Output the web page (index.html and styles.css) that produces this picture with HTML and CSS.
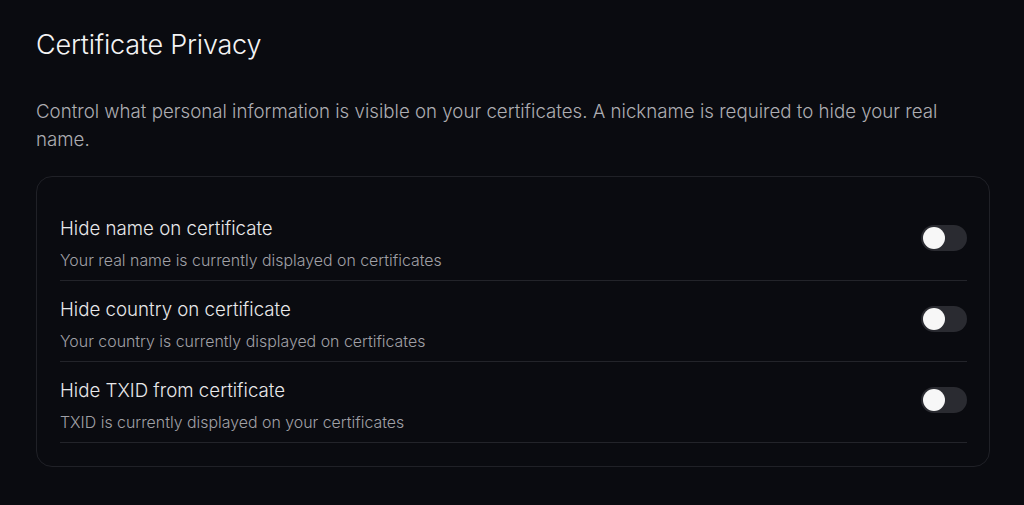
FILE: index.html
```html
<!DOCTYPE html>
<html lang="en">
<head>
<meta charset="utf-8">
<title>Certificate Privacy</title>
<link rel="stylesheet" href="styles.css">
</head>
<body>
<main class="section">
  <h2 class="section-title">Certificate Privacy</h2>
  <p class="section-desc">Control what personal information is visible on your certificates. A nickname is required to hide your real name.</p>
  <div class="card">
    <div class="row">
      <div class="row-text">
        <div class="row-title">Hide name on certificate</div>
        <div class="row-sub">Your real name is currently displayed on certificates</div>
      </div>
      <button class="switch" role="switch" aria-checked="false"><span class="knob"></span></button>
    </div>
    <div class="row">
      <div class="row-text">
        <div class="row-title">Hide country on certificate</div>
        <div class="row-sub">Your country is currently displayed on certificates</div>
      </div>
      <button class="switch" role="switch" aria-checked="false"><span class="knob"></span></button>
    </div>
    <div class="row">
      <div class="row-text">
        <div class="row-title">Hide TXID from certificate</div>
        <div class="row-sub">TXID is currently displayed on your certificates</div>
      </div>
      <button class="switch" role="switch" aria-checked="false"><span class="knob"></span></button>
    </div>
  </div>
</main>
</body>
</html>
```
FILE: styles.css
```css
html, body {
  margin: 0;
  padding: 0;
  background: #0a0b10;
}

body {
  font-family: Inter, "Noto Sans", sans-serif;
  color: #e6e6e8;
  width: 1024px;
  height: 505px;
  overflow: hidden;
}

.section {
  padding: 28px 34px 0 36px;
}

.section-title {
  margin: 0;
  font-size: 27px;
  font-weight: 300;
  line-height: 34px;
  color: #f4f4f5;
  letter-spacing: -0.2px;
}

.section-desc {
  margin: 36px 0 0;
  font-size: 18.7px;
  font-weight: 300;
  line-height: 28px;
  color: #adadb2;
  max-width: 920px;
}

.card {
  margin-top: 22px;
  border: 1px solid #202127;
  border-radius: 16px;
  padding: 23px 22px 23px 23px;
  background: #0a0b10;
}

.row {
  display: flex;
  align-items: center;
  justify-content: space-between;
  height: 80px;
  border-bottom: 1px solid #23242a;
}

.row-text {
  display: flex;
  flex-direction: column;
  gap: 11px;
  padding-top: 8px;
}

.row-title {
  font-size: 18.7px;
  font-weight: 300;
  line-height: 22px;
  color: #e8e8ea;
}

.row-sub {
  font-size: 15.9px;
  font-weight: 300;
  line-height: 20px;
  color: #a0a0a6;
}

.switch {
  position: relative;
  width: 46px;
  height: 26px;
  border: 0;
  border-radius: 13px;
  background: #2a2b31;
  padding: 0;
  margin: 0 0 4px;
  cursor: pointer;
}

.knob {
  position: absolute;
  top: 2px;
  left: 2px;
  width: 22px;
  height: 22px;
  border-radius: 50%;
  background: #f7f7f7;
}
```
